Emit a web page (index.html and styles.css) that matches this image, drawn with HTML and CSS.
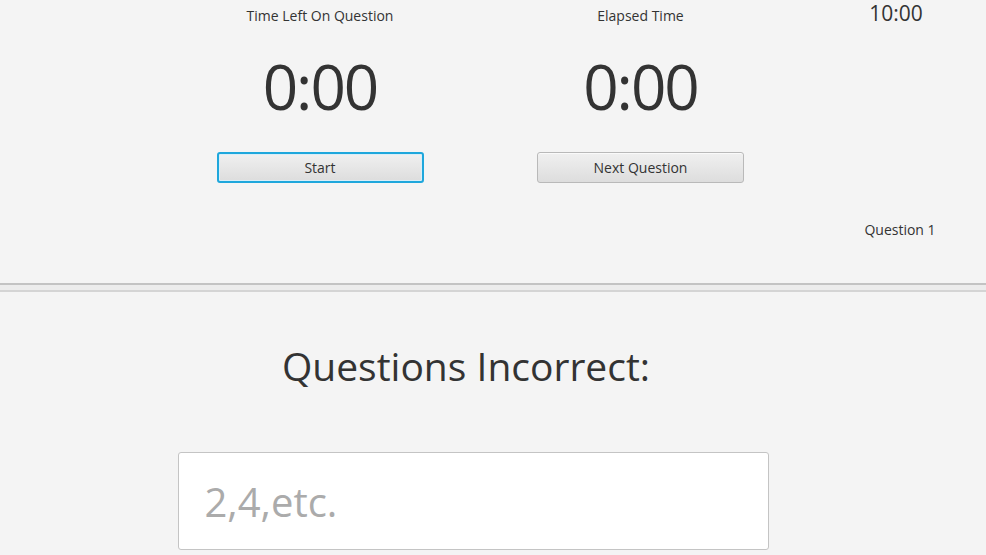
FILE: index.html
```html
<!DOCTYPE html>
<html>
<head>
<meta charset="utf-8">
<link rel="stylesheet" href="styles.css">
</head>
<body>
<div class="app">
  <section class="top">
    <div class="spacer"></div>
    <div class="timer-col">
      <div class="label">Time Left On Question</div>
      <div class="big">0:00</div>
      <button class="btn focused">Start</button>
    </div>
    <div class="timer-col">
      <div class="label">Elapsed Time</div>
      <div class="big">0:00</div>
      <button class="btn">Next Question</button>
    </div>
    <div class="side-col">
      <div class="total">10:00</div>
      <div class="qnum">Question 1</div>
    </div>
  </section>
  <div class="divider"></div>
  <section class="bottom">
    <h1 class="heading">Questions Incorrect:</h1>
    <input class="answer" type="text" placeholder="2,4,etc.">
  </section>
</div>
</body>
</html>
```
FILE: styles.css
```css
html, body {
  margin: 0;
  padding: 0;
  background: #f4f4f4;
}
body {
  font-family: "Open Sans", "Noto Sans", sans-serif;
  color: #333333;
  width: 986px;
  height: 555px;
  overflow: hidden;
}
.app {
  display: flex;
  flex-direction: column;
}
.top {
  height: 283px;
  display: grid;
  grid-template-columns: 160px 320px 321px 1fr;
  align-items: start;
}
.timer-col {
  display: flex;
  flex-direction: column;
  align-items: center;
  padding-top: 6px;
}
.label {
  font-size: 14px;
  line-height: 20px;
}
.big {
  font-size: 62px;
  line-height: 80px;
  margin-top: 20px;
  letter-spacing: -2px;
}
.btn {
  margin-top: 26px;
  width: 207px;
  height: 31px;
  font-family: inherit;
  font-size: 14px;
  color: #333;
  border: 1px solid #b9b9b9;
  border-radius: 3px;
  background: linear-gradient(#f0f0f0, #dddddd);
  box-shadow: inset 0 1px 0 #fafafa;
  padding: 0;
}
.btn.focused {
  border: 2px solid #1ea7dc;
  box-shadow: inset 0 0 0 1px #d8eef8;
}
.side-col {
  display: flex;
  flex-direction: column;
  align-items: center;
  padding-left: 8px;
}
.total {
  font-size: 21px;
  line-height: 26px;
  margin-top: 0;
  margin-right: 3px;
}
.qnum {
  font-size: 14px;
  line-height: 20px;
  margin-top: 194px;
  padding-left: 5px;
}
.divider {
  height: 5px;
  border-top: 2px solid #c3c3c3;
  border-bottom: 2px solid #d4d4d4;
  background: #ececec;
}
.bottom {
  display: flex;
  flex-direction: column;
  align-items: center;
  padding-right: 40px;
}
.heading {
  margin: 46px 14px 0 0;
  font-weight: normal;
  font-size: 39px;
  line-height: 56px;
  color: #333;
}
.answer {
  margin-top: 58px;
  width: 591px;
  height: 98px;
  box-sizing: border-box;
  border: 1px solid #c4c4c4;
  border-radius: 3px;
  background: #fff;
  padding: 0 26px;
  font-family: inherit;
  font-size: 40px;
  color: #333;
  outline: none;
}
.answer::placeholder {
  color: #ababab;
}
```
